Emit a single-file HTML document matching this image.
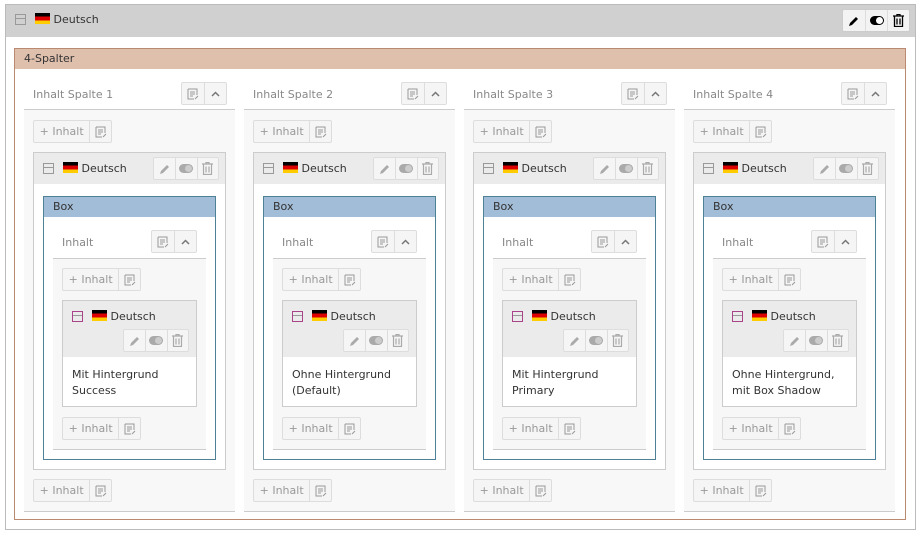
<!DOCTYPE html><html><head><meta charset="utf-8"><style>
*{box-sizing:border-box;margin:0;padding:0}
body{width:922px;height:537px;background:#fff;font-family:"DejaVu Sans","Liberation Sans",sans-serif;font-size:11px;color:#333;position:relative;overflow:hidden}
.a{position:absolute}
.flag{display:inline-block;width:15px;height:11px;background:linear-gradient(#000 0 33%,#d00 33% 66%,#fc0 66%);vertical-align:-1px}
.btn{position:absolute;height:23px;border:1px solid #ddd;background:#f5f5f5;border-radius:2px;display:flex}
.btn span{display:flex;align-items:center;justify-content:center;border-left:1px solid #ddd;width:22px;color:#999}
.btn span:first-child{border-left:0}
.add{color:#aaa;font-size:11px}
.ic{width:11px;height:11px;border:1px solid #999;display:inline-block;position:relative}
.ic:after{content:"";position:absolute;left:0;right:0;top:3px;border-top:1px solid #999}
.gray{color:#888}
</style></head><body>
<div class="a" style="left:5px;top:4px;width:911px;height:526px;border:1px solid #bbb"></div>
<div class="a" style="left:6px;top:5px;width:909px;height:32px;background:#d0d0d0"></div>
<div class="a" style="left:15px;top:14px"><span class="ic"></span></div>
<div class="a" style="left:35px;top:13px"><span class="flag"></span> Deutsch</div>
<div class="btn" style="left:842px;top:9px;height:23px;width:68px;background:#f3f3f3;border-color:#ccc">
<span style="width:22px"><svg width="12" height="12" viewBox="0 0 12 12"><path d="M1 11l1-3 6-6 2 2-6 6z" fill="#000"/></svg></span><span style="width:22px"><i style="width:14px;height:9px;background:#000;border-radius:5px;position:relative;display:block"><b style="position:absolute;right:1px;top:1px;width:7px;height:7px;background:#fff;border-radius:50%"></b></i></span><span style="width:22px"><svg width="11" height="13" viewBox="0 0 11 13"><path d="M0 2h11M4 2V0.5h3V2M1.5 2.5v10h8v-10M4 4.5v6M7 4.5v6" stroke="#000" fill="none" stroke-width="1.3"/></svg></span></div>
<div class="a" style="left:14px;top:48px;width:892px;height:472px;border:1px solid #b98a6f"></div>
<div class="a" style="left:15px;top:49px;width:890px;height:20px;background:#dfc0ad;padding:3px 9px;color:#333">4-Spalter</div>
<div id="cols"></div>
<script>
var texts=[["Mit Hintergrund","Success"],["Ohne Hintergrund","(Default)"],["Mit Hintergrund","Primary"],["Ohne Hintergrund,","mit Box Shadow"]];
var pen='<svg width="12" height="12" viewBox="0 0 12 12"><path d="M1 11l1-3 6-6 2 2-6 6z" fill="#aaa"/></svg>';
var tr='<svg width="11" height="13" viewBox="0 0 11 13"><path d="M0 2h11M4 2V0.5h3V2M1.5 2.5v10h8v-10M4 4.5v6M7 4.5v6" stroke="#aaa" fill="none" stroke-width="1.2"/></svg>';
var pg='<svg width="12" height="12" viewBox="0 0 12 12"><path d="M1 1h9v6M1 1v10h6M3 4h5M3 6h5M3 8h3M8 11l3-3" stroke="#999" fill="none"/></svg>';
var h="";
for(var i=0;i<4;i++){var o=220*i;
function B(x,y){return '<div class="btn add" style="left:'+(x+o)+'px;top:'+y+'px;width:79px"><span style="width:56px">+&nbsp;Inhalt</span><span>'+pg+'</span></div>';}
function T(x,y){return '<div class="btn" style="left:'+(x+o)+'px;top:'+y+'px;width:46px"><span>'+pg+'</span><span><svg width="9" height="6" viewBox="0 0 9 6"><path d="M1 5l3.5-3.5L8 5" stroke="#777" fill="none" stroke-width="1.5"/></svg></span></div>';}
function E(x,y){return '<div class="btn" style="left:'+(x+o)+'px;top:'+y+'px;width:66px;border-color:#ddd"><span>'+pen+'</span><span><i style="width:14px;height:9px;background:#aaa;border-radius:5px;display:block;position:relative"><b style="position:absolute;right:1px;top:1px;width:7px;height:7px;background:#ccc;border-radius:50%"></b></i></span><span>'+tr+'</span></div>';}
h+='<div class="a gray" style="left:'+(33+o)+'px;top:88px">Inhalt Spalte '+(i+1)+'</div>'+T(181,82);
h+='<div class="a" style="left:'+(24+o)+'px;top:109px;width:211px;height:403px;background:#f8f8f8;border-top:1px solid #ccc;border-bottom:1px solid #ccc"></div>';
h+=B(33,120);
h+='<div class="a" style="left:33px;left:'+(33+o)+'px;top:152px;width:193px;height:318px;border:1px solid #ccc;background:#fff"></div>';
h+='<div class="a" style="left:'+(34+o)+'px;top:153px;width:191px;height:31px;background:#ebebeb"></div>';
h+='<div class="a" style="left:'+(43+o)+'px;top:163px"><span class="ic"></span></div><div class="a" style="left:'+(63+o)+'px;top:162px"><span class="flag"></span> Deutsch</div>'+E(153,157);
h+='<div class="a" style="left:'+(43+o)+'px;top:196px;width:173px;height:264px;border:1px solid #4f8196"></div>';
h+='<div class="a" style="left:'+(44+o)+'px;top:197px;width:171px;height:20px;background:#a1bdd7;padding:3px 9px">Box</div>';
h+='<div class="a gray" style="left:'+(62+o)+'px;top:236px">Inhalt</div>'+T(151,230);
h+='<div class="a" style="left:'+(53+o)+'px;top:258px;width:153px;height:192px;background:#f7f7f7;border-top:1px solid #ccc;border-bottom:1px solid #ccc"></div>';
h+=B(62,268);
h+='<div class="a" style="left:'+(62+o)+'px;top:300px;width:135px;height:107px;border:1px solid #ccc;background:#fff"></div>';
h+='<div class="a" style="left:'+(63+o)+'px;top:301px;width:133px;height:56px;background:#ebebeb"></div>';
h+='<div class="a" style="left:'+(72+o)+'px;top:311px"><span class="ic" style="border-color:#a48"></span></div><div class="a" style="left:'+(92+o)+'px;top:310px"><span class="flag"></span> Deutsch</div>'+E(123,329);
h+='<div class="a" style="left:'+(72+o)+'px;top:367px;line-height:16px">'+texts[i][0]+'<br>'+texts[i][1]+'</div>';
h+=B(62,417)+B(33,479);
}
document.getElementById("cols").innerHTML=h;
</script>
</body></html>
